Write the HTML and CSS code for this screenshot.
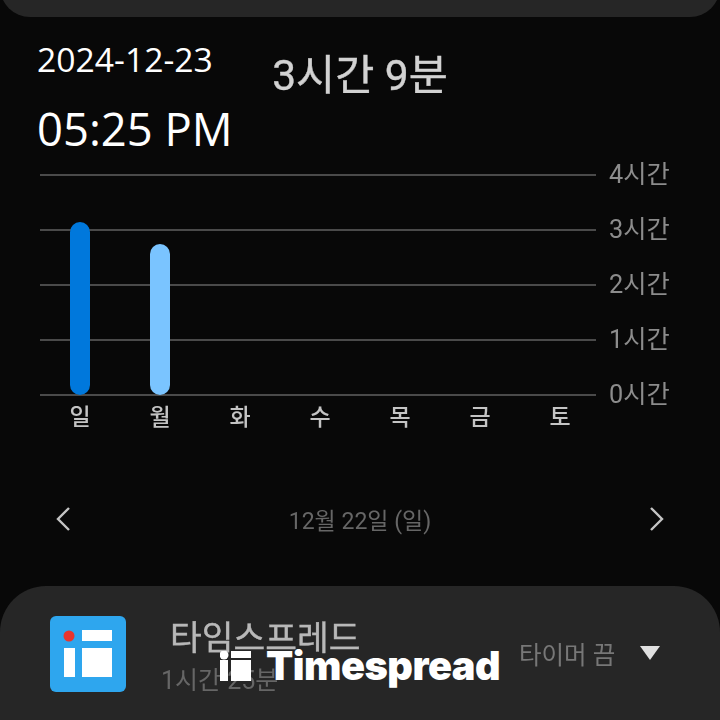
FILE: index.html
```html
<!DOCTYPE html>
<html lang="ko">
<head>
<meta charset="utf-8">
<title>Timespread</title>
<link rel="stylesheet" href="styles.css">
</head>
<body>
<div class="page">
  <div class="top-card"></div>
  <h1 class="total">3시간 9분</h1>
  <section class="chart">
    <div class="plot">
      <div class="grid">
        <div class="row"><span class="line"></span><span class="tick">4시간</span></div>
        <div class="row"><span class="line"></span><span class="tick">3시간</span></div>
        <div class="row"><span class="line"></span><span class="tick">2시간</span></div>
        <div class="row"><span class="line"></span><span class="tick">1시간</span></div>
        <div class="row"><span class="line"></span><span class="tick">0시간</span></div>
      </div>
      <div class="bars">
        <div class="slot"><span class="bar bar-sun"></span></div>
        <div class="slot"><span class="bar bar-mon"></span></div>
        <div class="slot"></div>
        <div class="slot"></div>
        <div class="slot"></div>
        <div class="slot"></div>
        <div class="slot"></div>
      </div>
    </div>
    <div class="days">
      <span>일</span><span>월</span><span>화</span><span>수</span><span>목</span><span>금</span><span>토</span>
    </div>
  </section>
  <nav class="pager">
    <svg class="chev" viewBox="0 0 16 26"><path d="M14 2 L3 13 L14 24"/></svg>
    <span class="pager-date">12월 22일 (일)</span>
    <svg class="chev" viewBox="0 0 16 26"><path d="M2 2 L13 13 L2 24"/></svg>
  </nav>
  <section class="app-card">
    <div class="app-icon">
      <svg viewBox="0 0 76 76">
        <rect x="14" y="32" width="11" height="29" fill="#fff"/>
        <rect x="32" y="14" width="30" height="11" fill="#fff"/>
        <rect x="32" y="32" width="30" height="29" fill="#fff"/>
        <circle cx="19" cy="20" r="5.500" fill="#e8352e"/>
      </svg>
    </div>
    <div class="app-text">
      <div class="app-name">타임스프레드</div>
      <div class="app-time">1시간 25분</div>
    </div>
    <div class="timer">타이머 끔</div>
    <svg class="caret" viewBox="0 0 22 16"><path d="M1 1 H21 L11 15 Z"/></svg>
  </section>
  <div class="clock">
    <div class="clock-date">2024-12-23</div>
    <div class="clock-time">05:25 PM</div>
  </div>
  <div class="mark">
    <svg class="mark-logo" viewBox="0 0 31 30">
      <circle cx="4" cy="4" r="4.500" fill="#fff"/>
      <rect x="0" y="9" width="8" height="21" fill="#fff"/>
      <rect x="11" y="0" width="20" height="7" fill="#fff"/>
      <rect x="11" y="9" width="20" height="21" fill="#fff"/>
    </svg>
    <span class="mark-text">Timespread</span>
  </div>
</div>
</body>
</html>
```
FILE: styles.css
```css
* { box-sizing: border-box; }
html, body { margin: 0; padding: 0; }
body { background: #080808; font-family: "Roboto", "Noto Sans CJK KR", sans-serif; }
.page { position: relative; width: 720px; height: 720px; overflow: hidden; background: #080808; display: flex; flex-direction: column; }
.top-card { height: 60px; margin-top: -43px; flex: none; border-radius: 42px; background: #262626; }
.total { margin: 33px 0 0; height: 51px; line-height: 51px; text-align: center; font-size: 42.500px; font-weight: 400; -webkit-text-stroke: .4px #d2d2d2; color: #d2d2d2; filter: blur(.6px); flex: none; }
.chart { margin-top: 73px; padding-left: 40px; flex: none; }
.plot { position: relative; height: 222px; }
.grid { display: flex; flex-direction: column; justify-content: space-between; height: 222px; }
.row { height: 2px; display: flex; align-items: center; }
.line { width: 556px; height: 2px; background: #4a4a4a; }
.tick { margin-left: 13px; font-size: 25.300px; line-height: 28px; color: #8c8c8c; filter: blur(.6px); white-space: nowrap; }
.bars { position: absolute; left: 0; bottom: 1px; width: 560px; height: 221px; display: grid; grid-template-columns: repeat(7, 80px); align-items: end; }
.slot { display: flex; justify-content: center; }
.bar { display: block; width: 20px; border-radius: 10px; }
.bar-sun { height: 173px; background: #0078dc; }
.bar-mon { height: 151px; background: #7ac4ff; }
.days { display: grid; grid-template-columns: repeat(7, 80px); margin-top: 7px; font-size: 23px; line-height: 30px; text-align: center; color: #c4c4c4; font-weight: 500; filter: blur(.5px); }
.pager { margin-top: 71px; height: 30px; padding: 0 55px 0 55px; display: flex; justify-content: space-between; align-items: center; flex: none; }
.chev { width: 16px; height: 26px; fill: none; stroke: #c4c4c4; stroke-width: 2.400; }
.pager-date { font-size: 23px; color: #666; filter: blur(.6px); }
.app-card { margin-top: 52px; height: 180px; flex: none; border-radius: 46px; background: #262626; padding: 30px 60px 0 50px; display: flex; align-items: flex-start; }
.app-icon { width: 76px; height: 76px; flex: none; border-radius: 6px; background: #2ea6ee; filter: blur(.4px); }
.app-icon svg { display: block; width: 76px; height: 76px; }
.app-text { margin-left: 35px; width: 369px; flex: none; filter: blur(.6px); }
.app-name { margin-left: 9px; font-size: 34.500px; line-height: 44px; font-weight: 400; -webkit-text-stroke: .4px #b8b8b8; color: #b8b8b8; }
.app-time { font-size: 25px; line-height: 30px; margin-top: 6px; color: #666; }
.timer { margin-top: 23px; font-size: 24.500px; line-height: 34px; color: #777; filter: blur(.6px); white-space: nowrap; margin-left: -11px; }
.caret { width: 22px; height: 16px; margin: 29px 0 0 24px; fill: #e0e0e0; flex: none; }
.clock { position: absolute; left: 37px; top: 36px; color: #fff; font-family: "Open Sans", sans-serif; }
.clock-date { font-size: 33.700px; line-height: 46px; }
.clock-time { font-size: 45.400px; line-height: 60px; margin-top: 16px; }
.mark { position: absolute; left: 220px; top: 648px; display: flex; align-items: center; height: 36px; }
.mark-logo { width: 31px; height: 30px; display: block; }
.mark-text { margin-left: 15px; font-family: "Inter", sans-serif; font-size: 39.700px; font-weight: 900; line-height: 36px; color: #fff; letter-spacing: -.5px; }
```
